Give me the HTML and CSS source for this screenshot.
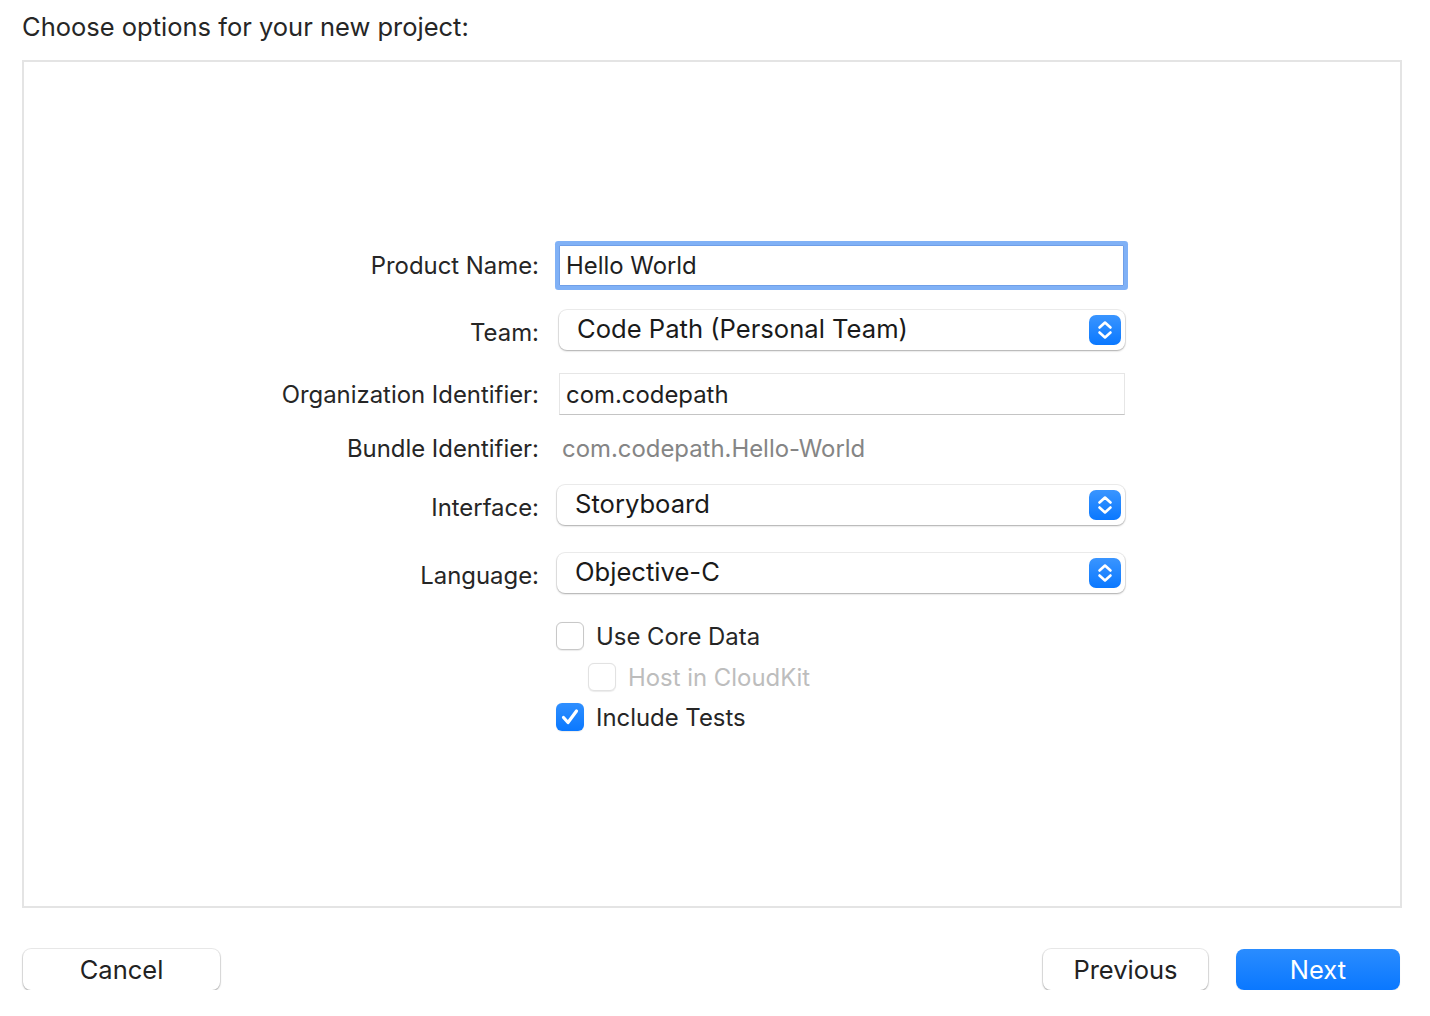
FILE: index.html
```html
<!DOCTYPE html>
<html lang="en">
<head>
<meta charset="utf-8">
<title>Choose options for your new project</title>
<link rel="stylesheet" href="styles.css">
</head>
<body>
  <div class="title">Choose options for your new project:</div>
  <div class="panel">
    <div class="form">
      <div class="row row-product">
        <div class="label">Product Name:</div>
        <div class="field field-focus">Hello World</div>
      </div>
      <div class="row row-team">
        <div class="label label-popup">Team:</div>
        <div class="popup">
          <span class="popup-text">Code Path (Personal Team)</span>
          <span class="stepper"><svg width="32" height="30" viewBox="0 0 32 30"><path d="M10.5 12.5 L16 7.5 L21.5 12.5 M10.5 17.5 L16 22.5 L21.5 17.5" fill="none" stroke="#fff" stroke-width="2.6" stroke-linecap="round" stroke-linejoin="round"/></svg></span>
        </div>
      </div>
      <div class="row row-org">
        <div class="label">Organization Identifier:</div>
        <div class="field field-plain">com.codepath</div>
      </div>
      <div class="row row-bundle">
        <div class="label">Bundle Identifier:</div>
        <div class="value">com.codepath.Hello-World</div>
      </div>
      <div class="row row-interface">
        <div class="label label-popup">Interface:</div>
        <div class="popup popup-wide">
          <span class="popup-text">Storyboard</span>
          <span class="stepper"><svg width="32" height="30" viewBox="0 0 32 30"><path d="M10.5 12.5 L16 7.5 L21.5 12.5 M10.5 17.5 L16 22.5 L21.5 17.5" fill="none" stroke="#fff" stroke-width="2.6" stroke-linecap="round" stroke-linejoin="round"/></svg></span>
        </div>
      </div>
      <div class="row row-language">
        <div class="label label-popup">Language:</div>
        <div class="popup popup-wide">
          <span class="popup-text">Objective-C</span>
          <span class="stepper"><svg width="32" height="30" viewBox="0 0 32 30"><path d="M10.5 12.5 L16 7.5 L21.5 12.5 M10.5 17.5 L16 22.5 L21.5 17.5" fill="none" stroke="#fff" stroke-width="2.6" stroke-linecap="round" stroke-linejoin="round"/></svg></span>
        </div>
      </div>
      <div class="row row-check1">
        <div class="label"></div>
        <div class="check">
          <span class="box"></span>
          <span class="check-text">Use Core Data</span>
        </div>
      </div>
      <div class="row row-check2">
        <div class="label"></div>
        <div class="check check-indent check-disabled">
          <span class="box"></span>
          <span class="check-text">Host in CloudKit</span>
        </div>
      </div>
      <div class="row row-check3">
        <div class="label"></div>
        <div class="check">
          <span class="box box-on"><svg width="28" height="28" viewBox="0 0 28 28"><path d="M7.5 14.5 L12 19.5 L20.5 8" fill="none" stroke="#fff" stroke-width="3.2" stroke-linecap="round" stroke-linejoin="round"/></svg></span>
          <span class="check-text">Include Tests</span>
        </div>
      </div>
    </div>
  </div>
  <div class="footer">
    <button class="btn btn-cancel">Cancel</button>
    <div class="footer-right">
      <button class="btn btn-prev">Previous</button>
      <button class="btn btn-next">Next</button>
    </div>
  </div>
</body>
</html>
```

FILE: styles.css
```css
html, body {
  margin: 0;
  padding: 0;
  background: #ffffff;
}

body {
  font-family: Inter, "Liberation Sans", sans-serif;
  color: #262626;
  padding: 0 28px 0 22px;
  width: 1380px;
}

.title {
  font-size: 25.5px;
  line-height: 28px;
  padding-top: 13px;
  margin-bottom: 19px;
  color: #262626;
}

.panel {
  box-sizing: border-box;
  height: 848px;
  border: 2px solid #e4e4e4;
  background: #ffffff;
}

.form {
  padding-top: 183px;
}

.row {
  display: flex;
  align-items: center;
}

.label {
  width: 515px;
  margin-right: 20px;
  text-align: right;
  font-size: 23.9px;
  color: #262626;
  flex: none;
}

.label-popup {
  padding-top: 5px;
}

.row-product { height: 41px; }
.row-team { height: 40px; margin-top: 24px; }
.row-org { height: 42px; margin-top: 23px; }
.row-bundle { height: 40px; margin-top: 13px; }
.row-interface { height: 40px; margin-top: 17px; }
.row-language { height: 40px; margin-top: 28px; }
.row-check1 { height: 28px; margin-top: 29px; }
.row-check2 { height: 28px; margin-top: 13px; }
.row-check3 { height: 28px; margin-top: 12px; }

.field {
  box-sizing: border-box;
  width: 566px;
  display: flex;
  align-items: center;
  padding-left: 6px;
  font-size: 23.9px;
  color: #1f1f1f;
  background: #fff;
}

.field-focus {
  width: 565px;
  height: 41px;
  border: 1px solid #6f9fe8;
  border-radius: 1px;
  box-shadow: 0 0 0 4px #80b1f6;
}

.field-plain {
  height: 42px;
  border: 1px solid #e6e6e6;
  border-bottom: 1px solid #c4c4c4;
}

.value {
  font-size: 23.9px;
  color: #858585;
  padding-left: 3px;
}

.popup {
  box-sizing: border-box;
  width: 566px;
  height: 40px;
  display: flex;
  align-items: center;
  justify-content: space-between;
  background: #fff;
  border-radius: 8px;
  box-shadow: 0 0 0 1px rgba(0, 0, 0, 0.07), 0 1px 2px rgba(0, 0, 0, 0.28);
  padding: 0 4px 0 18px;
}

.popup-wide {
  width: 568px;
  margin-left: -2px;
}

.popup-text {
  font-size: 25.6px;
  color: #1a1a1a;
  margin-top: -3px;
}

.stepper {
  width: 32px;
  height: 30px;
  border-radius: 7px;
  background: linear-gradient(#3a95ff, #0a78ff);
  display: flex;
}

.check {
  display: flex;
  align-items: center;
  margin-left: -3px;
}

.check-indent {
  margin-left: 29px;
}

.box {
  box-sizing: border-box;
  width: 28px;
  height: 28px;
  border-radius: 6px;
  border: 1px solid #c8c8c8;
  background: #fff;
  box-shadow: 0 0.5px 1px rgba(0, 0, 0, 0.08);
  display: flex;
  margin-right: 12px;
}

.box-on {
  border: none;
  background: linear-gradient(#2f8fff, #0a78ff);
}

.check-text {
  font-size: 23.9px;
  color: #262626;
}

.check-disabled .box {
  border-color: #e2e2e2;
}

.check-disabled .check-text {
  color: #bdbdbd;
}

.footer {
  display: flex;
  justify-content: space-between;
  margin-top: 41px;
}

.footer-right {
  display: flex;
  gap: 28px;
  margin-right: 2px;
}

.btn {
  box-sizing: border-box;
  height: 41px;
  border: none;
  border-radius: 8px;
  font-family: Inter, "Liberation Sans", sans-serif;
  font-size: 25.5px;
  color: #222;
  background: #fff;
  box-shadow: 0 0 0 1px rgba(0, 0, 0, 0.08), 0 1px 2px rgba(0, 0, 0, 0.3);
  padding: 0 0 1px 0;
}

.btn-cancel {
  width: 197px;
  margin-left: 1px;
}

.btn-prev {
  width: 165px;
}

.btn-next {
  width: 164px;
  color: #fff;
  background: linear-gradient(#2a8cff, #0a78ff);
  box-shadow: 0 1px 1px rgba(0, 0, 0, 0.12);
}
```
